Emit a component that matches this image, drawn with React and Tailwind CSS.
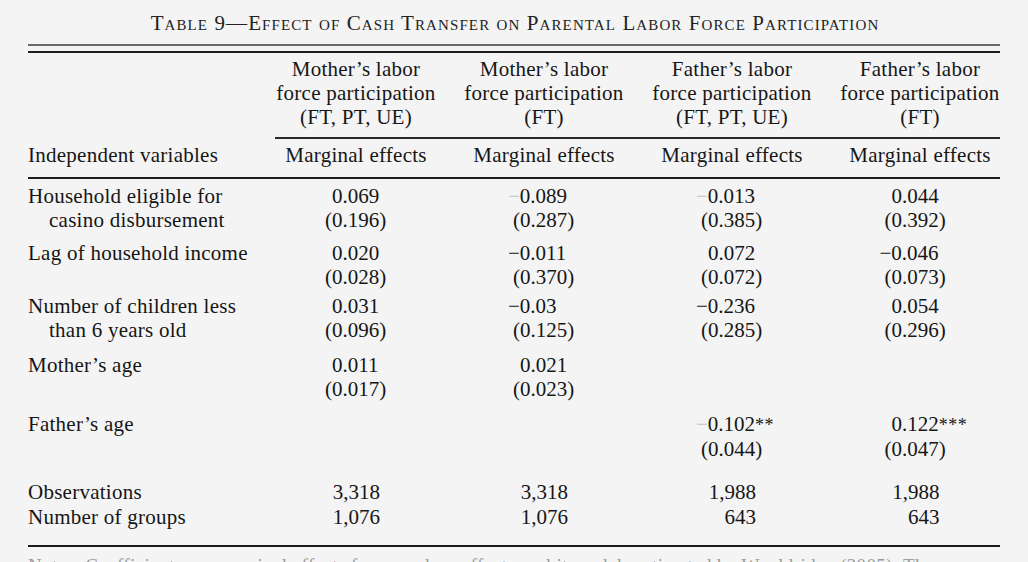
import React from "react";

const COLS = "grid grid-cols-[234px_188px_188px_188px_188px]";

function Num({ text, faint }) {
  let minus = null;
  let rest = text;
  if (text.startsWith("−")) {
    minus = "−";
    rest = text.slice(1);
  }
  let stars = "";
  const m = rest.match(/^(.*?)(\*+)$/);
  if (m) {
    rest = m[1];
    stars = m[2];
  }
  return (
    <div className="whitespace-nowrap pl-[7px]">
      {minus && (
        <span className={"-ml-[12px] " + (faint ? "text-[#c4c4c4]" : "")}>{minus}</span>
      )}
      {rest}
      {stars && <span className="text-[18px] tracking-[0.5px]">{stars}</span>}
    </div>
  );
}

function Cell({ val, last }) {
  if (!val) return <div />;
  return (
    <div className={"flex justify-center " + (last ? "pr-[9px]" : "")}>
      <div className="w-[62px]">
        <Num text={val[0]} faint={val[2]} />
        <div className="whitespace-nowrap">{val[1]}</div>
      </div>
    </div>
  );
}

function CountCell({ v, last }) {
  return (
    <div className={"flex justify-center " + (last ? "pr-[9px]" : "")}>
      <div className="w-[62px] pr-[7px] text-right">{v}</div>
    </div>
  );
}

const rows = [
  {
    mt: "mt-[5px]",
    label: ["Household eligible for", "casino disbursement"],
    vals: [
      ["0.069", "(0.196)"],
      ["−0.089", "(0.287)", true],
      ["−0.013", "(0.385)", true],
      ["0.044", "(0.392)"],
    ],
  },
  {
    mt: "mt-[9px]",
    label: ["Lag of household income"],
    vals: [
      ["0.020", "(0.028)"],
      ["−0.011", "(0.370)"],
      ["0.072", "(0.072)"],
      ["−0.046", "(0.073)"],
    ],
  },
  {
    mt: "mt-[5px]",
    label: ["Number of children less", "than 6 years old"],
    vals: [
      ["0.031", "(0.096)"],
      ["−0.03", "(0.125)"],
      ["−0.236", "(0.285)"],
      ["0.054", "(0.296)"],
    ],
  },
  {
    mt: "mt-[11px]",
    label: ["Mother’s age"],
    vals: [["0.011", "(0.017)"], ["0.021", "(0.023)"], null, null],
  },
  {
    mt: "mt-[11px]",
    label: ["Father’s age"],
    vals: [null, null, ["−0.102**", "(0.044)", true], ["0.122***", "(0.047)"]],
  },
];

const headers = [
  ["Mother’s labor", "force participation", "(FT, PT, UE)"],
  ["Mother’s labor", "force participation", "(FT)"],
  ["Father’s labor", "force participation", "(FT, PT, UE)"],
  ["Father’s labor", "force participation", "(FT)"],
];

export default function App() {
  return (
    <div className="w-[1028px] h-[562px] overflow-hidden bg-[#f4f4f4] text-[#161616] font-['Liberation_Serif',serif] text-[21px] leading-[24px]">
      <div className="pt-[11px] text-center text-[#222] text-[21px] tracking-[1.1px] [font-variant:small-caps] pl-[2px]">
        Table 9—Effect of Cash Transfer on Parental Labor Force Participation
      </div>

      <div className="ml-[28px] w-[972px]">
        <div className="mt-[9px] h-[2px] bg-[#6a6a6a]" />
        <div className="mt-[5px] h-[2px] bg-[#1e1e1e]" />

        <div className={COLS + " mt-[4px] tracking-[0.25px]"}>
          <div />
          {headers.map((h, i) => (
            <div key={i} className="text-center whitespace-nowrap">
              {h.map((l, j) => (
                <div key={j}>{l}</div>
              ))}
            </div>
          ))}
        </div>

        <div className="mt-[8px] ml-[247px] h-[2px] bg-[#2a2a2a]" />

        <div className={COLS + " mt-[4px] tracking-[0.25px]"}>
          <div className="whitespace-nowrap">Independent variables</div>
          {[0, 1, 2, 3].map((i) => (
            <div key={i} className="text-center whitespace-nowrap">
              Marginal effects
            </div>
          ))}
        </div>

        <div className="mt-[10px] h-[2px] bg-[#1e1e1e]" />

        {rows.map((r, i) => (
          <div key={i} className={COLS + " " + r.mt}>
            <div className="whitespace-nowrap tracking-[0.25px]">
              {r.label.map((l, j) => (
                <div key={j} className={j > 0 ? "pl-[21px]" : ""}>
                  {l}
                </div>
              ))}
            </div>
            {r.vals.map((v, j) => (
              <Cell key={j} val={v} last={j === 3} />
            ))}
          </div>
        ))}

        <div className={COLS + " mt-[19px]"}>
          <div className="whitespace-nowrap tracking-[0.25px]">Observations</div>
          {["3,318", "3,318", "1,988", "1,988"].map((v, j) => (
            <CountCell key={j} v={v} last={j === 3} />
          ))}
        </div>
        <div className={COLS + " mt-[1px]"}>
          <div className="whitespace-nowrap tracking-[0.25px]">Number of groups</div>
          {["1,076", "1,076", "643", "643"].map((v, j) => (
            <CountCell key={j} v={v} last={j === 3} />
          ))}
        </div>

        <div className="mt-[16px] h-[2px] bg-[#1a1a1a]" />

        <div className="mt-[7px] whitespace-nowrap text-[19px] text-[#9a9a9a] tracking-[0.4px]">
          Notes: Coefficients are marginal effects from random-effects probit models estimated by Wooldridge (2005). The
        </div>
      </div>
    </div>
  );
}
